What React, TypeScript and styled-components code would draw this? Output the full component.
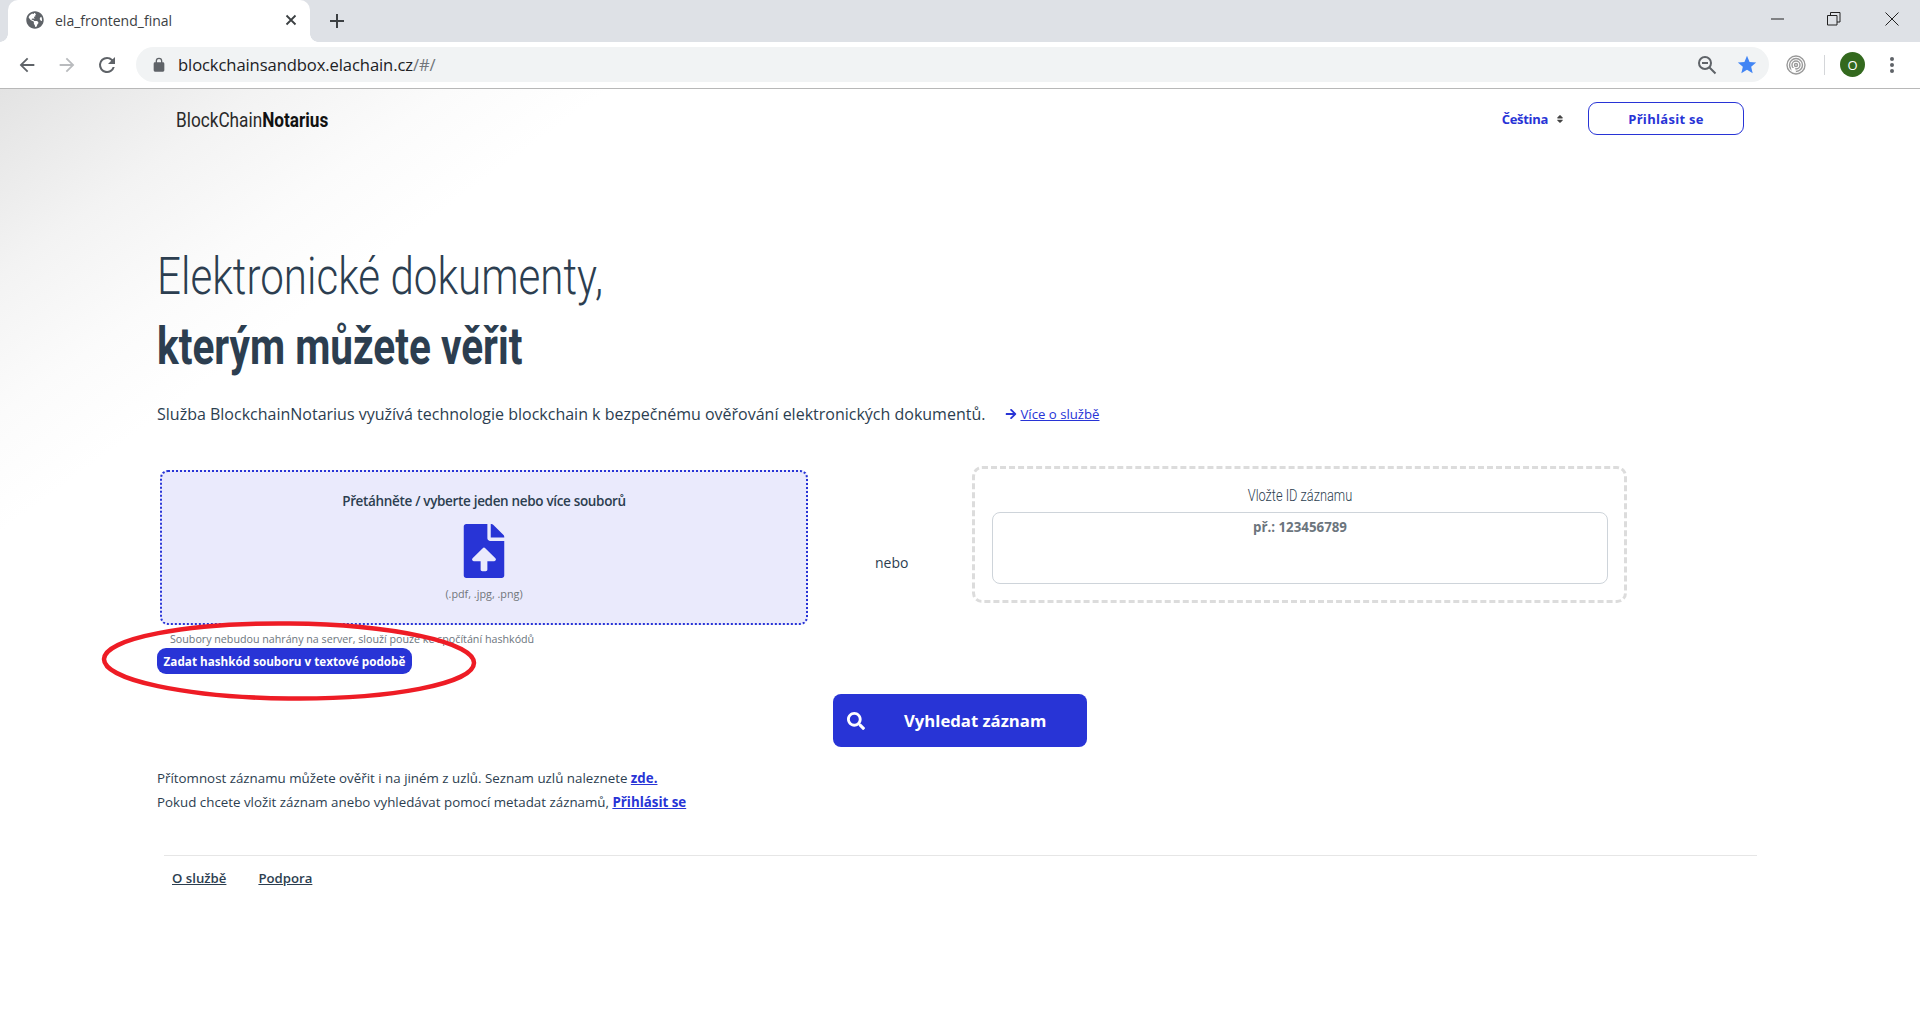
import React from "react";
import styled, { createGlobalStyle } from "styled-components";
import { FaFileUpload, FaSearch, FaGlobeAmericas, FaArrowRight, FaSort } from "react-icons/fa";

const BLUE = "#2834d6";
const NARROW = `"Roboto", "Liberation Sans", sans-serif`;
const BODY = `"Open Sans", "Noto Sans", sans-serif`;

const Global = createGlobalStyle`
  html, body { margin: 0; padding: 0; background: #fff; }
  body { font-family: ${BODY}; width: 1920px; height: 1030px; overflow: hidden; }
  * { box-sizing: border-box; }
`;

const Shell = styled.div`
  width: 1920px;
  height: 1030px;
  display: flex;
  flex-direction: column;
  position: relative;
`;
const TabStrip = styled.div`
  height: 42px;
  background: #dee1e6;
  display: flex;
  align-items: flex-end;
  padding-left: 8px;
`;
const Tab = styled.div`
  width: 302px;
  height: 42px;
  background: #fff;
  border-radius: 10px 10px 0 0;
  display: flex;
  align-items: center;
  padding: 0 12px 2px 18px;
  color: #3c4043;
  font-size: 14px;
  gap: 11px;
  position: relative;
  &::before, &::after {
    content: "";
    position: absolute;
    bottom: 0;
    width: 8px;
    height: 8px;
    background: radial-gradient(circle at var(--cx) 0, #dee1e6 7.5px, #fff 8px);
  }
  &::before { left: -8px; --cx: 0; }
  &::after { right: -8px; --cx: 100%; }
`;
const TabTitle = styled.span`
  flex: 1;
`;
const NewTab = styled.div`
  width: 32px;
  height: 42px;
  margin-left: 11px;
  display: flex;
  align-items: center;
  justify-content: center;
`;
const WindowControls = styled.div`
  margin-left: auto;
  height: 42px;
  display: flex;
  align-items: center;
`;
const WinBtn = styled.div<{ $close?: boolean }>`
  width: 56px;
  height: 42px;
  display: flex;
  align-items: center;
  justify-content: center;
  padding-bottom: 4px;
  margin-left: ${(p) => (p.$close ? "2px" : "0")};
`;
const Toolbar = styled.div`
  height: 47px;
  border-bottom: 1px solid #b8b8b8;
  background: #fff;
  display: flex;
  align-items: center;
  padding: 0 0 1px 7px;
`;
const NavBtn = styled.div`
  width: 40px;
  height: 28px;
  display: flex;
  align-items: center;
  justify-content: center;
`;
const AddressBar = styled.div`
  margin-left: 9px;
  width: 1633px;
  height: 35px;
  border-radius: 18px;
  background: #f1f3f4;
  display: flex;
  align-items: center;
  padding: 0 2px 0 15px;
  font-size: 16.6px;
  color: #202124;
  letter-spacing: -0.1px;
`;
const UrlHost = styled.span`
  margin-left: 11px;
`;
const UrlPath = styled.span`
  color: #70757a;
  flex: 1;
`;
const OmniIcon = styled.div`
  width: 40px;
  display: flex;
  justify-content: center;
`;
const ToolIcons = styled.div`
  flex: 1;
  display: flex;
  align-items: center;
`;
const Divider = styled.div`
  width: 1px;
  height: 20px;
  background: #d4d6d9;
  margin-left: 18px;
`;
const Avatar = styled.div`
  width: 25px;
  height: 25px;
  border-radius: 50%;
  background: #33691e;
  color: #fff;
  font-size: 13px;
  display: flex;
  align-items: center;
  justify-content: center;
  margin-left: 15px;
`;
const Page = styled.main`
  flex: 1;
  background: linear-gradient(144deg, #e3e3e3 0, #f3f3f3 8%, #fbfbfb 14%, #fff 19%);
`;
const Header = styled.header`
  margin-top: 13px;
  height: 33px;
  padding: 0 176px;
  display: flex;
  align-items: center;
`;
const LogoBox = styled.div`
  flex: 1;
  padding-top: 2px;
`;
const Logo = styled.span`
  display: inline-block;
  font-family: ${NARROW};
  font-size: 20px;
  color: #2a2a2a;
  transform: scaleX(0.86);
  transform-origin: left center;
  white-space: nowrap;
`;
const LogoStrong = styled.span`
  font-weight: 700;
  color: #111;
`;
const Lang = styled.div`
  color: ${BLUE};
  font-weight: 700;
  font-size: 13px;
  letter-spacing: -0.3px;
  display: flex;
  align-items: center;
  gap: 7px;
  margin-right: 23px;
`;
const LoginButton = styled.button`
  width: 156px;
  height: 33px;
  border: 1px solid ${BLUE};
  border-radius: 9px;
  background: #fff;
  color: ${BLUE};
  font: 700 13px ${BODY};
  letter-spacing: 0.3px;
`;
const Content = styled.div`
  padding-left: 157px;
`;
const HeadLine = styled.h1<{ $strong?: boolean }>`
  margin: 0;
  font-family: ${NARROW};
  font-size: 52px;
  line-height: 70px;
  color: #2c3e50;
  font-weight: ${(p) => (p.$strong ? 700 : 300)};
  transform: scaleX(${(p) => (p.$strong ? 0.78 : 0.81)});
  transform-origin: left center;
  white-space: nowrap;
`;
const Title = styled.div`
  margin-top: 107px;
`;
const Lead = styled.p`
  margin: 20px 0 0;
  height: 24px;
  display: flex;
  align-items: center;
  font-size: 16px;
  color: #2c3e50;
`;
const MoreLink = styled.a`
  margin-left: 20px;
  color: ${BLUE};
  font-size: 13.2px;
  display: inline-flex;
  align-items: center;
  gap: 3px;
  span { text-decoration: underline; }
`;
const Row = styled.section`
  margin-top: 40px;
  display: grid;
  grid-template-columns: 651px 164px 655px;
  height: 182px;
`;
const LeftCol = styled.div`
  padding: 4px 0 0 3px;
`;
const DropZone = styled.div`
  width: 648px;
  height: 155px;
  border: 2px dotted ${BLUE};
  border-radius: 8px;
  background: #eaeafc;
  display: flex;
  flex-direction: column;
  align-items: center;
  padding-top: 19px;
  color: ${BLUE};
`;
const DropTitle = styled.div`
  font-size: 13.5px;
  font-weight: 600;
  letter-spacing: -0.33px;
  color: #2c3e50;
  line-height: 20px;
  margin-bottom: 13px;
`;
const DropFormats = styled.div`
  font-size: 10.8px;
  color: #70757a;
  margin-top: 8px;
`;
const Note = styled.div`
  margin: 7px 0 0 10px;
  font-size: 10.7px;
  line-height: 14px;
  color: #6c757d;
`;
const HashButton = styled.button`
  display: block;
  margin: 2px 0 0 -3px;
  width: 255px;
  height: 26px;
  border: 0;
  border-radius: 9px;
  background: ${BLUE};
  color: #fff;
  font: 700 11.7px ${BODY};
  padding: 0;
`;
const Nebo = styled.div`
  padding-left: 67px;
  font-size: 14px;
  color: #2c3e50;
  height: 194px;
  line-height: 194px;
`;
const IdBox = styled.div`
  height: 137px;
  border: 3px dashed #dcdcdc;
  border-radius: 10px;
  padding: 14px 16px 0 17px;
  text-align: center;
`;
const IdLabel = styled.div`
  font-family: ${NARROW};
  font-size: 16px;
  font-weight: 300;
  line-height: 26px;
  color: #2c3e50;
  transform: scaleX(0.8);
`;
const IdInput = styled.div`
  height: 72px;
  border: 1px solid #ced4da;
  border-radius: 8px;
  margin-top: 3px;
  padding-top: 6px;
  font-size: 13.3px;
  line-height: 16px;
  font-weight: 700;
  color: #6c757d;
  background: #fff;
`;
const SearchRow = styled.div`
  margin-top: 46px;
  display: flex;
  justify-content: center;
`;
const SearchButton = styled.button`
  width: 254px;
  height: 53px;
  border: 0;
  border-radius: 8px;
  background: ${BLUE};
  color: #fff;
  font: 700 16.7px ${BODY};
  display: flex;
  align-items: center;
  padding: 0 0 0 14px;
  gap: 39px;
`;
const Info = styled.div`
  margin: 20px 0 0 157px;
  font-size: 13.33px;
  line-height: 23.5px;
  color: #2c3e50;
`;
const InfoLink = styled.a`
  color: ${BLUE};
  font-weight: 700;
  text-decoration: underline;
`;
const Footer = styled.footer`
  margin: 41px 163px 0 164px;
  border-top: 1px solid #e6e6e6;
  padding: 13px 0 0 8px;
  display: flex;
  gap: 32px;
`;
const FooterLink = styled.a`
  font-size: 13.2px;
  font-weight: 600;
  color: #2c3e50;
  text-decoration: underline;
`;
const Annotation = styled.svg`
  position: absolute;
  left: 98px;
  top: 616px;
  pointer-events: none;
`;

const Gray = "#5f6368";

export default function App() {
  return (
    <Shell>
      <Global />
      <TabStrip>
        <Tab>
          <FaGlobeAmericas size={18} color={Gray} />
          <TabTitle>ela_frontend_final</TabTitle>
          <svg width="14" height="14" viewBox="0 0 14 14"><path d="M2.5 2.5l9 9M11.5 2.5l-9 9" stroke="#3c4043" strokeWidth="1.8" /></svg>
        </Tab>
        <NewTab>
          <svg width="16" height="16" viewBox="0 0 16 16"><path d="M8 1v14M1 8h14" stroke="#3c4043" strokeWidth="2" /></svg>
        </NewTab>
        <WindowControls>
          <WinBtn><svg width="14" height="14" viewBox="0 0 14 14"><path d="M0 7h13" stroke="#222" strokeWidth="1" /></svg></WinBtn>
          <WinBtn><svg width="14" height="14" viewBox="0 0 14 14"><path d="M.5 3.5h9.5v9.5H.5zM3.5 3.5V.5h9.5v9.5h-3" fill="none" stroke="#222" strokeWidth="1" /></svg></WinBtn>
          <WinBtn $close><svg width="14" height="14" viewBox="0 0 14 14"><path d="M.5.5l13 13M13.5.5l-13 13" stroke="#222" strokeWidth="1" /></svg></WinBtn>
        </WindowControls>
      </TabStrip>
      <Toolbar>
        <NavBtn><svg width="22" height="22" viewBox="0 0 24 24" fill={Gray}><path d="M20 11H7.83l5.59-5.59L12 4l-8 8 8 8 1.41-1.41L7.83 13H20v-2z" /></svg></NavBtn>
        <NavBtn><svg width="22" height="22" viewBox="0 0 24 24" fill="#b9bbbe"><path d="M4 11h12.17l-5.59-5.59L12 4l8 8-8 8-1.41-1.41L16.17 13H4v-2z" /></svg></NavBtn>
        <NavBtn><svg width="24" height="24" viewBox="0 0 24 24" fill={Gray}><path d="M17.65 6.35A7.96 7.96 0 0 0 12 4a8 8 0 1 0 7.73 10h-2.08A6 6 0 1 1 12 6c1.66 0 3.14.69 4.22 1.78L13 11h7V4l-2.35 2.35z" /></svg></NavBtn>
        <AddressBar>
          <svg width="16" height="16" viewBox="0 0 24 24" fill={Gray}><path d="M18 8h-1V6a5 5 0 0 0-10 0v2H6a2 2 0 0 0-2 2v10a2 2 0 0 0 2 2h12a2 2 0 0 0 2-2V10a2 2 0 0 0-2-2zM9 6a3 3 0 0 1 6 0v2H9V6z" /></svg>
          <UrlHost>blockchainsandbox.elachain.cz</UrlHost>
          <UrlPath>/#/</UrlPath>
          <OmniIcon>
            <svg width="20" height="20" viewBox="0 0 20 20" fill="none" stroke={Gray} strokeWidth="2"><circle cx="8" cy="8" r="6" /><path d="M12.5 12.5l6 6M5 8h6" /></svg>
          </OmniIcon>
          <OmniIcon>
            <svg width="22" height="22" viewBox="0 0 24 24" fill="#4285f4"><path d="M12 17.27 18.18 21l-1.64-7.03L22 9.24l-7.19-.61L12 2 9.19 8.63 2 9.24l5.46 4.73L5.82 21z" /></svg>
          </OmniIcon>
        </AddressBar>
        <ToolIcons>
          <svg style={{ marginLeft: 17 }} width="20" height="20" viewBox="0 0 20 20" fill="none" stroke="#9a9a9a" strokeWidth="1.4"><circle cx="10" cy="10" r="9" /><circle cx="10" cy="10" r="6.5" /><circle cx="10" cy="10" r="4" /><circle cx="10" cy="10" r="1.5" /><path d="M5 13h4l1 4H6z" fill="#fff" stroke="none" /></svg>
          <Divider />
          <Avatar>O</Avatar>
          <svg style={{ marginLeft: 25 }} width="4" height="18" viewBox="0 0 4 18" fill={Gray}><circle cx="2" cy="3" r="2" /><circle cx="2" cy="9" r="2" /><circle cx="2" cy="15" r="2" /></svg>
        </ToolIcons>
      </Toolbar>
      <Page>
        <Header>
          <LogoBox><Logo>BlockChain<LogoStrong>Notarius</LogoStrong></Logo></LogoBox>
          <Lang>Čeština <FaSort size={10} color="#444" /></Lang>
          <LoginButton>Přihlásit se</LoginButton>
        </Header>
        <Content>
          <Title>
            <HeadLine>Elektronické dokumenty,</HeadLine>
            <HeadLine $strong>kterým můžete věřit</HeadLine>
          </Title>
          <Lead>
            Služba BlockchainNotarius využívá technologie blockchain k bezpečnému ověřování elektronických dokumentů.
            <MoreLink><FaArrowRight size={12} /><span>Více o službě</span></MoreLink>
          </Lead>
          <Row>
            <LeftCol>
              <DropZone>
                <DropTitle>Přetáhněte / vyberte jeden nebo více souborů</DropTitle>
                <FaFileUpload size={54} />
                <DropFormats>(.pdf, .jpg, .png)</DropFormats>
              </DropZone>
              <Note>Soubory nebudou nahrány na server, slouží pouze ke spočítání hashkódů</Note>
              <HashButton>Zadat hashkód souboru v textové podobě</HashButton>
            </LeftCol>
            <Nebo>nebo</Nebo>
            <IdBox>
              <IdLabel>Vložte ID záznamu</IdLabel>
              <IdInput>př.: 123456789</IdInput>
            </IdBox>
          </Row>
        </Content>
        <SearchRow>
          <SearchButton><FaSearch size={18} />Vyhledat záznam</SearchButton>
        </SearchRow>
        <Info>
          Přítomnost záznamu můžete ověřit i na jiném z uzlů. Seznam uzlů naleznete <InfoLink>zde.</InfoLink>
          <br />
          Pokud chcete vložit záznam anebo vyhledávat pomocí metadat záznamů, <InfoLink>Přihlásit se</InfoLink>
        </Info>
        <Footer>
          <FooterLink>O službě</FooterLink>
          <FooterLink>Podpora</FooterLink>
        </Footer>
      </Page>
      <Annotation width="384" height="90" viewBox="0 0 384 90">
        <ellipse cx="191" cy="45" rx="185" ry="37.5" fill="none" stroke="#ee1c25" strokeWidth="4.5" transform="rotate(0.6 191 45)" />
      </Annotation>
    </Shell>
  );
}
